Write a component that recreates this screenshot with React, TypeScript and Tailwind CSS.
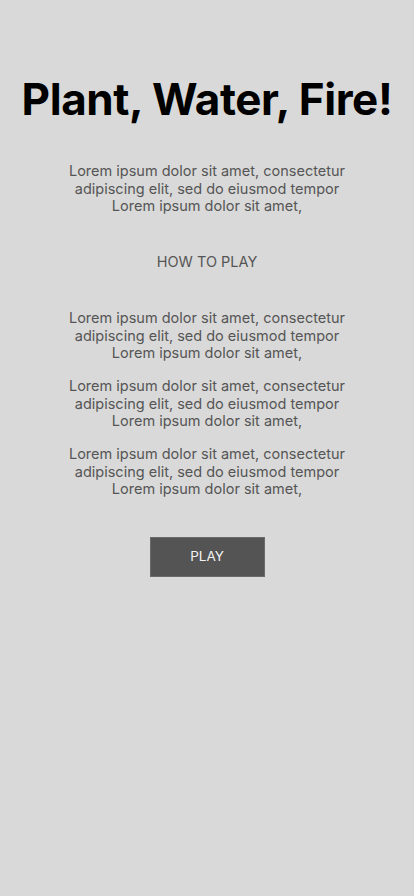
const lines = [
  'Lorem ipsum dolor sit amet, consectetur',
  'adipiscing elit, sed do eiusmod tempor',
  'Lorem ipsum dolor sit amet,',
];

const Blurb = () => (
  <p className="text-center text-[14.5px] leading-[17.5px] text-[#555555]">
    {lines.map((l) => (
      <span key={l} className="block">{l}</span>
    ))}
  </p>
);

const App = () => {
  return (
    <div
      className="min-h-[896px] w-full bg-[#d9d9d9] flex flex-col items-center pt-[72px]"
      style={{fontFamily: 'Inter, "Noto Sans", sans-serif'}}
    >
      <h1 className="text-[44px] leading-[54px] font-bold text-black tracking-[-0.4px]">
        Plant, Water, Fire!
      </h1>
      <div className="mt-[36px]">
        <Blurb />
      </div>
      <h2 className="mt-[38px] text-[14.5px] leading-[17.5px] text-[#555555]">HOW TO PLAY</h2>
      <div className="mt-[39px] flex flex-col gap-[15.5px]">
        <Blurb />
        <Blurb />
        <Blurb />
      </div>
      <button className="mt-[39px] w-[115px] h-[40px] bg-[#545454] border border-[#6a6a6a] text-[#f2f2f2] text-[13.5px]">
        PLAY
      </button>
    </div>
  );
};

export default App;
